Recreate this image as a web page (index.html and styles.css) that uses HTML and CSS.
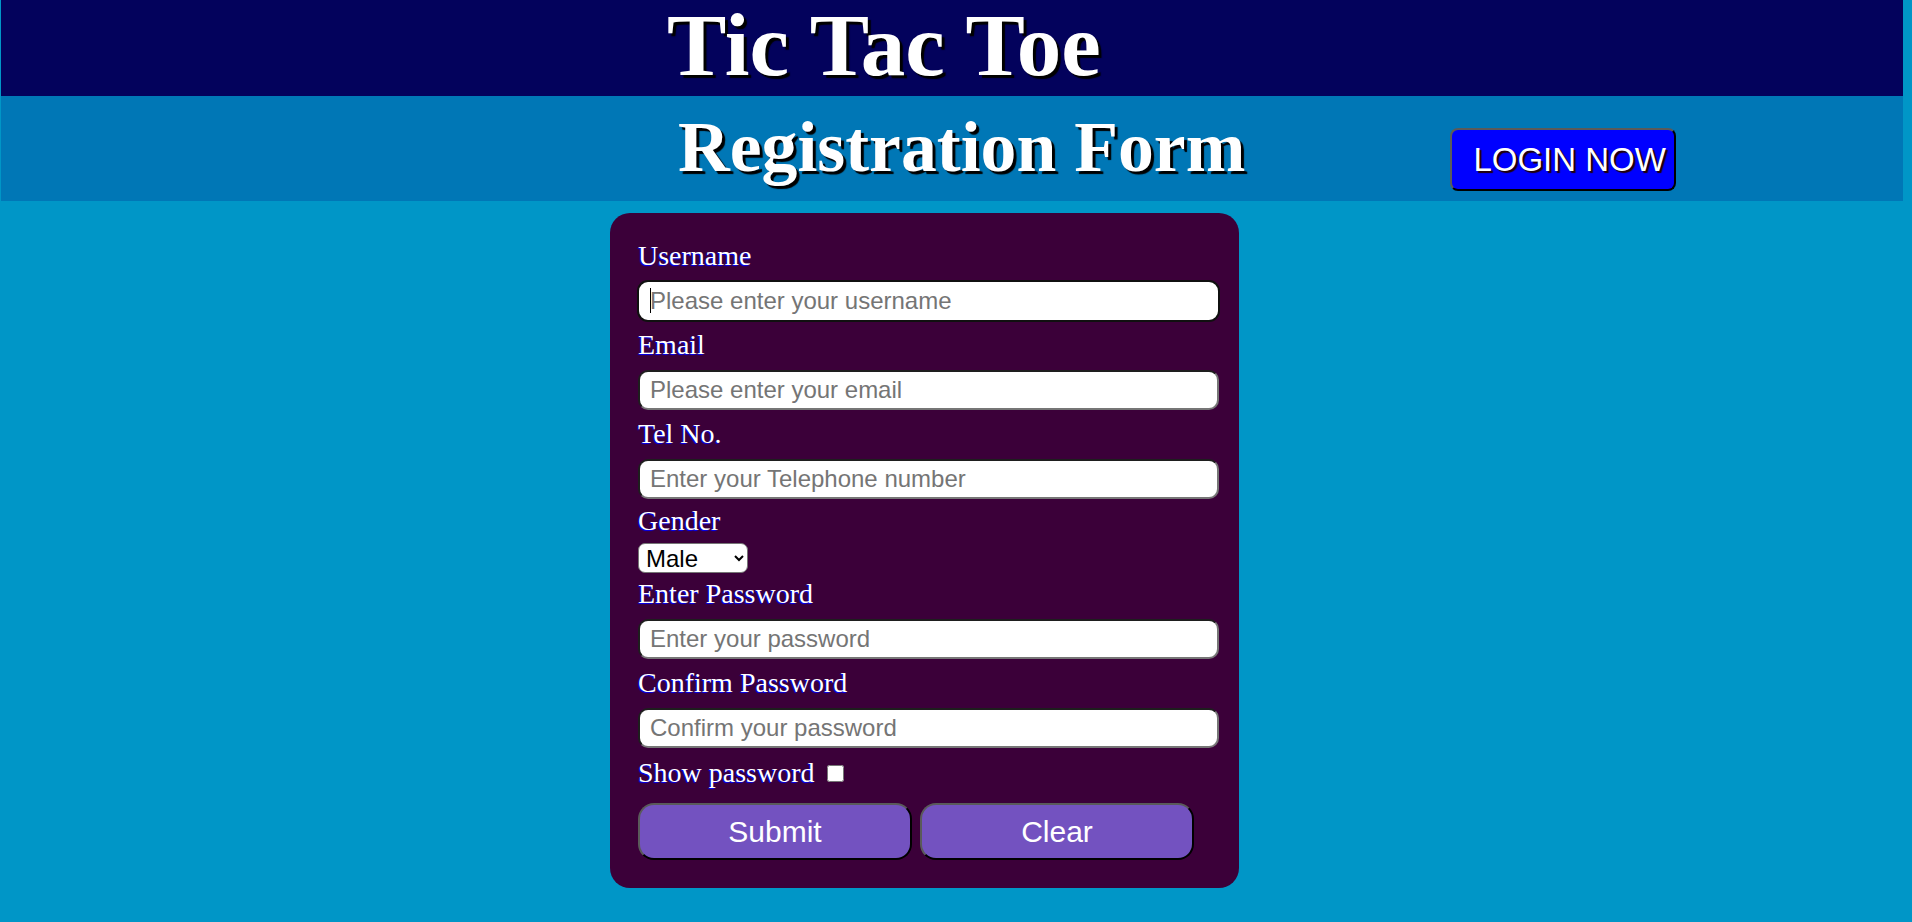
FILE: index.html
```html
<!DOCTYPE html>
<html lang="en">
<head>
<meta charset="utf-8">
<title>Tic Tac Toe - Registration</title>
<link rel="stylesheet" href="styles.css">
</head>
<body>
<header class="site-header">
  <div class="title-bar">
    <h1 class="game-title">Tic Tac Toe</h1>
  </div>
  <div class="sub-bar">
    <h2 class="form-title">Registration Form</h2>
    <button class="login-btn" type="button">LOGIN NOW</button>
  </div>
</header>
<main class="page">
  <form class="reg-card">
    <label class="field-label" for="username">Username</label>
    <div class="input-wrap">
      <input class="text-input is-focused" id="username" type="text" placeholder="Please enter your username">
      <span class="caret"></span>
    </div>

    <label class="field-label" for="email">Email</label>
    <input class="text-input" id="email" type="email" placeholder="Please enter your email">

    <label class="field-label" for="tel">Tel No.</label>
    <input class="text-input tight-after" id="tel" type="tel" placeholder="Enter your Telephone number">

    <label class="field-label" for="gender">Gender</label>
    <select class="gender-select" id="gender">
      <option>Male</option>
      <option>Female</option>
    </select>

    <label class="field-label" for="pass">Enter Password</label>
    <input class="text-input" id="pass" type="password" placeholder="Enter your password">

    <label class="field-label" for="cpass">Confirm Password</label>
    <input class="text-input loose-after" id="cpass" type="password" placeholder="Confirm your password">

    <label class="field-label show-label">Show password <input class="show-check" type="checkbox"></label>

    <div class="btn-row">
      <button class="form-btn" type="submit">Submit</button>
      <button class="form-btn" type="reset">Clear</button>
    </div>
  </form>
</main>
</body>
</html>
```

FILE: styles.css
```css
* {
  box-sizing: border-box;
}

body {
  margin: 0;
  background: #0096c7;
  font-family: "Liberation Serif", "Times New Roman", serif;
}

.site-header {
  margin: 0 9px 0 1px;
}

.title-bar {
  background: #03025c;
  height: 96px;
  padding-left: 666px;
}

.game-title {
  margin: 0;
  font: bold 89px/91px "Liberation Serif", "Times New Roman", serif;
  color: #fff;
  text-shadow: 3px 3px 1px #000;
  white-space: nowrap;
}

.sub-bar {
  background: #0077b6;
  height: 105px;
  display: flex;
  align-items: flex-start;
  padding-left: 677px;
}

.form-title {
  margin: 11px 0 0;
  font: bold 71.7px/80px "Liberation Serif", "Times New Roman", serif;
  color: #fff;
  text-shadow: 3px 3px 1px #000;
  white-space: nowrap;
}

.login-btn {
  margin: 32px 0 0 205px;
  width: 226px;
  height: 63px;
  padding: 0 10px 0 21px;
  text-align: left;
  background: #0000ff;
  color: #fff;
  font: 33px "Liberation Sans", Arial, sans-serif;
  border: 2px solid;
  border-color: #5a5a5a #000 #000 #5a5a5a;
  border-radius: 8px;
  text-shadow: 2px 2px 1px #200;
  white-space: nowrap;
}

.page {
  padding-top: 12px;
}

.reg-card {
  margin-left: 610px;
  width: 629px;
  background: #3b0039;
  border-radius: 20px;
  padding: 27px 20px 28px 28px;
  display: flex;
  flex-direction: column;
  align-items: flex-start;
}

.field-label {
  display: block;
  color: #fff;
  font-size: 28px;
  line-height: 32px;
  text-shadow: -1px 1px 1px #0000ff;
  white-space: nowrap;
}

.input-wrap {
  position: relative;
  margin: 9px 0 8px;
}

.text-input {
  display: block;
  width: 581px;
  height: 40px;
  margin: 9px 0 8px;
  padding: 0 10px;
  font: 24px "Liberation Sans", Arial, sans-serif;
  color: #000;
  background: #fff;
  border: 2px solid;
  border-color: #1e1e1e #767676 #767676 #1e1e1e;
  border-radius: 10px;
}

.text-input::placeholder {
  color: #757575;
}

.input-wrap .text-input {
  margin: 0;
}

.text-input.is-focused {
  border: 2px solid #fff;
  outline: 2px solid #101010;
  outline-offset: -1px;
}

.caret {
  position: absolute;
  left: 12px;
  top: 7px;
  width: 1px;
  height: 25px;
  background: #000;
}

.tight-after {
  margin-bottom: 6px;
}

.loose-after {
  margin-bottom: 9px;
}

.gender-select {
  margin: 6px 0 5px;
  width: 110px;
  height: 30px;
  padding: 0 0 0 3px;
  font: 24px "Liberation Sans", Arial, sans-serif;
  color: #000;
  background-color: #fff;
  border: 1px solid #767676;
  border-radius: 7px;
}

.show-check {
  width: 17px;
  height: 17px;
  margin: 3px 3px 1px 5px;
}

.btn-row {
  display: flex;
  gap: 8px;
  margin-top: 14px;
}

.form-btn {
  width: 274px;
  height: 57px;
  background: #7352c0;
  color: #fff;
  font: 30px "Liberation Sans", Arial, sans-serif;
  border: 2px solid;
  border-color: #5a5a5a #000 #000 #5a5a5a;
  border-radius: 16px;
}
```
